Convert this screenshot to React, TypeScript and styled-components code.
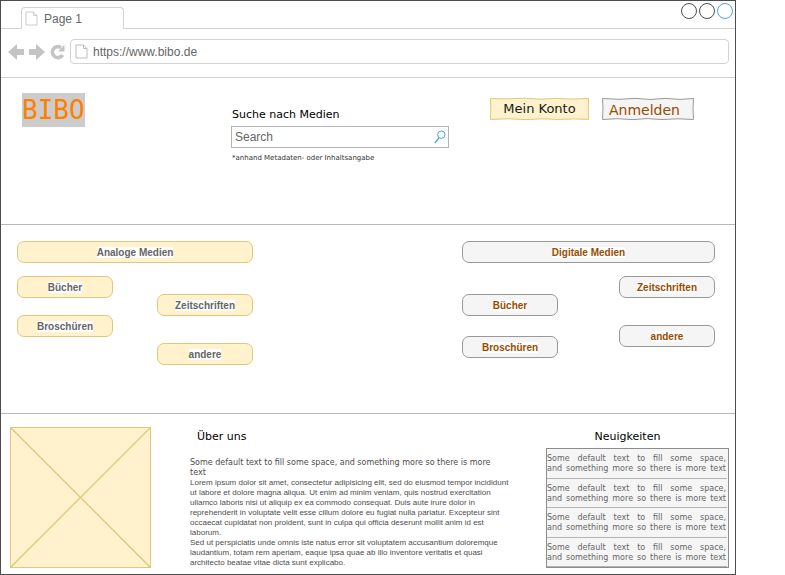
import React from "react";
import styled, { createGlobalStyle, css } from "styled-components";

type Tone = "cream" | "grey";

const tones = {
  cream: { fill: "#fff2cc", line: "#dfc87c", text: "#666666" },
  grey: { fill: "#f5f5f5", line: "#999999", text: "#994c00" },
};

const arial = '"Liberation Sans", Arial, sans-serif';
const verdana = '"DejaVu Sans", Verdana, sans-serif';

const GlobalStyle = createGlobalStyle`
  *, *::before, *::after { box-sizing: border-box; }
  body { margin: 0; background: #ffffff; font-family: ${arial}; color: #666666; }
  h1, h2, p, ul { margin: 0; padding: 0; }
  button, input { font: inherit; color: inherit; }
  button { padding: 0; border: 0; background: none; cursor: pointer; }
`;

const BrowserWindow = styled.div`
  margin-right: 49px;
  min-width: 640px;
  border: 1px solid #4d4d4d;
`;

const TabBar = styled.div`
  display: flex;
  justify-content: space-between;
  align-items: flex-start;
  height: 28px;
  padding: 0 2px 0 20px;
  border-bottom: 1px solid #d3d3d3;
`;

const Tab = styled.button`
  display: flex;
  align-items: center;
  gap: 6px;
  width: 103px;
  height: 22px;
  margin-top: 6px;
  padding: 0 3px;
  border: 1px solid #d3d3d3;
  border-bottom: 0;
  border-radius: 4px 4px 0 0;
  background: #ffffff;
  font-size: 12px;
`;

const WindowControls = styled.div`
  display: flex;
  gap: 2px;
  padding-top: 2px;
`;

const Circle = styled.button<{ $color: string }>`
  width: 16px;
  height: 16px;
  border: 1px solid ${(p) => p.$color};
  border-radius: 50%;
`;

const Toolbar = styled.div`
  display: flex;
  align-items: center;
  height: 49px;
  padding: 0 6px 3px 7px;
  border-bottom: 1px solid #d3d3d3;
`;

const NavButton = styled.button`
  display: flex;
  width: 21px;
  height: 18px;
`;

const AddressField = styled.label`
  display: flex;
  flex: 1;
  align-items: center;
  gap: 5px;
  height: 25px;
  margin-left: -1px;
  padding: 0 4px;
  border: 1px solid #d3d3d3;
  border-radius: 4px;
`;

const TextInput = styled.input`
  flex: 1;
  min-width: 0;
  height: 20px;
  padding: 0;
  border: 0;
  outline: 0;
  background: transparent;
  font-size: 12px;
  appearance: none;
  &::placeholder { color: #666666; opacity: 1; }
`;

const Header = styled.header`
  display: flex;
  align-items: flex-start;
  height: 147px;
  padding: 15px 41px 0 21px;
  border-bottom: 1px solid #b8b8b8;
`;

const LogoCell = styled.div`
  width: 209px;
`;

const Logo = styled.h1`
  width: max-content;
  background: #cccccc;
  color: #ff8000;
  font: 400 26px/34px "DejaVu Sans Mono", monospace;
`;

const SearchForm = styled.form`
  flex: 1;
  margin-right: 41px;
  padding-top: 15px;
  font-family: ${verdana};
`;

const SearchLabel = styled.label`
  display: block;
  padding-left: 1px;
  color: #000000;
  font-size: 11px;
  line-height: 14px;
`;

const SearchBox = styled.div`
  display: flex;
  align-items: center;
  height: 22px;
  margin: 4px 0 6px;
  padding: 0 2px 0 3px;
  border: 1px solid #b3b3b3;
  font-family: ${arial};
`;

const Hint = styled.p`
  padding-left: 1px;
  color: #333333;
  font-size: 7px;
  line-height: 9px;
`;

const Actions = styled.div`
  display: flex;
  gap: 13px;
  padding-top: 5px;
`;

const SketchButton = styled.button<{ $kind: "account" | "login" }>`
  position: relative;
  height: 22px;
  font-family: ${verdana};
  white-space: nowrap;
  ${(p) =>
    p.$kind === "account"
      ? css`
          width: 99px;
          color: #1a1a1a;
          font-size: 13px;
          line-height: 22px;
        `
      : css`
          width: 92px;
          padding-right: 7px;
          color: #994c00;
          font-size: 14px;
          line-height: 24px;
        `}
`;

const SketchOutline = styled.svg`
  position: absolute;
  inset: 0;
  width: 100%;
  height: 100%;
  overflow: visible;
`;

const SketchText = styled.span`
  position: relative;
`;

const MediaSection = styled.section`
  display: flex;
  justify-content: space-between;
  height: 189px;
  padding: 16px 20px 0 16px;
  border-bottom: 1px solid #b8b8b8;
`;

const MediaGroup = styled.div<{ $width: number }>`
  width: ${(p) => p.$width}px;
`;

const MediaColumns = styled.div`
  display: flex;
  justify-content: space-between;
  padding-top: 13px;
`;

const MediaColumn = styled.div<{ $top: number; $gap: number }>`
  display: flex;
  flex-direction: column;
  gap: ${(p) => p.$gap}px;
  width: 96px;
  padding-top: ${(p) => p.$top}px;
`;

const Pill = styled.button<{ $tone: Tone }>`
  display: flex;
  align-items: center;
  justify-content: center;
  width: 100%;
  height: 22px;
  border: 1px solid ${(p) => tones[p.$tone].line};
  border-radius: 7px;
  background: ${(p) => tones[p.$tone].fill};
  color: ${(p) => tones[p.$tone].text};
  font-size: 10px;
  font-weight: 700;
`;

const PillText = styled.span`
  background: #ffffff;
  line-height: 11px;
`;

const InfoSection = styled.section`
  display: flex;
  align-items: flex-start;
  height: 160px;
  padding: 13px 6px 0 9px;
`;

const Picture = styled.svg`
  flex: none;
  width: 141px;
  height: 141px;
`;

const Heading = styled.h2`
  color: #000000;
  font: 400 11px/14px ${verdana};
`;

const About = styled.article`
  flex: 1;
  min-width: 0;
  padding: 3px 0 0 39px;
  color: #4d4d4d;

  ${Heading} {
    padding-left: 7px;
    margin-bottom: 14px;
  }
`;

const Paragraph = styled.p<{ $lead?: boolean }>`
  font-family: ${(p) => (p.$lead ? verdana : arial)};
  font-size: 8px;
  line-height: 10px;
  white-space: pre-line;
`;

const News = styled.aside`
  width: 183px;
  padding-top: 3px;

  ${Heading} {
    margin: 0 20px 4px 0;
    text-align: center;
  }
`;

const NewsList = styled.ul`
  display: flex;
  flex-direction: column;
  height: 120px;
  padding-right: 1px;
  border: 1px solid #8c8c8c;
  background: #f5f5f5;
  list-style: none;
`;

const NewsItem = styled.li`
  flex: 1;
  padding: 5px 1px 0 0;
  border-bottom: 1px solid #b3b3b3;
  color: #666666;
  font: 8px/10px ${verdana};
  text-align: justify;
  text-align-last: justify;
  white-space: pre-line;
`;

const PageIcon = ({ color = "#cccccc" }: { color?: string }) => (
  <svg width="13" height="15" viewBox="0 0 13 15" fill="none" stroke={color} aria-hidden="true">
    <path d="M1 1h7.5l3.5 3.5V14H1zM8.5 1v3.5H12" />
  </svg>
);

const Outline = ({ tone, width }: { tone: Tone; width: number }) => (
  <SketchOutline viewBox={`0 0 ${width} 22`} preserveAspectRatio="none" aria-hidden="true">
    <path
      d={
        tone === "cream"
          ? "M.5.7L18 .8 34 .2 51 1.2 66 .4 81 1.1 98.5.5 98.2 12 98.5 21.4 84 20.9 68 21.4 53 20.8 36 21.6 19 20.8.5 21.4.8 10Z"
          : "M.5.5L17 1.3 33 .4 49 1.5 63 .4 78 1.4 91.5.5 91 11 91.5 21.5 76 20.8 60 21.5 45 20.6 31 21.6 15 20.7.5 21.5 1 10Z"
      }
      fill={tones[tone].fill}
      stroke={tones[tone].line}
      strokeLinejoin="round"
    />
  </SketchOutline>
);

interface ColumnData {
  top: number;
  gap: number;
  items: string[];
}

const media: { title: string; tone: Tone; width: number; columns: ColumnData[] }[] = [
  {
    title: "Analoge Medien",
    tone: "cream",
    width: 236,
    columns: [
      { top: 0, gap: 17, items: ["Bücher", "Broschüren"] },
      { top: 18, gap: 27, items: ["Zeitschriften", "andere"] },
    ],
  },
  {
    title: "Digitale Medien",
    tone: "grey",
    width: 253,
    columns: [
      { top: 18, gap: 20, items: ["Bücher", "Broschüren"] },
      { top: 0, gap: 27, items: ["Zeitschriften", "andere"] },
    ],
  },
];

const lead = "Some default text to fill some space, and something more so there is more\ntext";

const newsText = "Some default text to fill some space,\nand something more so there is more text";

const lorem = `Lorem ipsum dolor sit amet, consectetur adipisicing elit, sed do eiusmod tempor incididunt
ut labore et dolore magna aliqua. Ut enim ad minim veniam, quis nostrud exercitation
ullamco laboris nisi ut aliquip ex ea commodo consequat. Duis aute irure dolor in
reprehenderit in voluptate velit esse cillum dolore eu fugiat nulla pariatur. Excepteur sint
occaecat cupidatat non proident, sunt in culpa qui officia deserunt mollit anim id est
laborum.
Sed ut perspiciatis unde omnis iste natus error sit voluptatem accusantium doloremque
laudantium, totam rem aperiam, eaque ipsa quae ab illo inventore veritatis et quasi
architecto beatae vitae dicta sunt explicabo.`;

const MediaPill = ({ tone, children }: { tone: Tone; children: React.ReactNode }) => (
  <Pill type="button" $tone={tone}>
    <PillText>{children}</PillText>
  </Pill>
);

export default function App() {
  return (
    <>
      <GlobalStyle />
      <BrowserWindow>
        <TabBar>
          <Tab type="button">
            <PageIcon />
            Page 1
          </Tab>
          <WindowControls>
            <Circle type="button" aria-label="Minimieren" $color="#4d4d4d" />
            <Circle type="button" aria-label="Maximieren" $color="#4d4d4d" />
            <Circle type="button" aria-label="Schließen" $color="#4ba3e3" />
          </WindowControls>
        </TabBar>
        <Toolbar>
          <NavButton type="button" aria-label="Zurück">
            <svg width="17" height="18" viewBox="0 0 17 18" fill="#c4c4c4">
              <path d="M0 9 9 1v5h7v6H9v5z" />
            </svg>
          </NavButton>
          <NavButton type="button" aria-label="Vorwärts">
            <svg width="17" height="18" viewBox="0 0 17 18" fill="#c4c4c4">
              <path d="M16 9 7 1v5H0v6h7v5z" />
            </svg>
          </NavButton>
          <NavButton type="button" aria-label="Neu laden">
            <svg width="17" height="18" viewBox="0 0 17 18">
              <path d="M12.6 12A5.5 5.5 0 1 1 11 4.6" fill="none" stroke="#c4c4c4" strokeWidth="3.6" />
              <path d="M14.5 1.5V8.5H8z" fill="#c4c4c4" />
            </svg>
          </NavButton>
          <AddressField>
            <PageIcon color="#bdbdbd" />
            <TextInput type="text" aria-label="Adresse" defaultValue="https://www.bibo.de" />
          </AddressField>
        </Toolbar>

        <Header>
          <LogoCell>
            <Logo>BIBO</Logo>
          </LogoCell>
          <SearchForm onSubmit={(e) => e.preventDefault()}>
            <SearchLabel htmlFor="search">Suche nach Medien</SearchLabel>
            <SearchBox>
              <TextInput id="search" type="text" placeholder="Search" />
              <svg width="12" height="14" viewBox="0 0 12 14" fill="none" stroke="#4ba3e3" aria-hidden="true">
                <circle cx="7.3" cy="4.7" r="3.7" />
                <path d="M5 7.8.8 13" strokeWidth="1.3" />
              </svg>
            </SearchBox>
            <Hint>*anhand Metadaten- oder Inhaltsangabe</Hint>
          </SearchForm>
          <Actions>
            <SketchButton type="button" $kind="account">
              <Outline tone="cream" width={99} />
              <SketchText>Mein Konto</SketchText>
            </SketchButton>
            <SketchButton type="button" $kind="login">
              <Outline tone="grey" width={92} />
              <SketchText>Anmelden</SketchText>
            </SketchButton>
          </Actions>
        </Header>

        <MediaSection>
          {media.map((group) => (
            <MediaGroup key={group.title} $width={group.width}>
              <MediaPill tone={group.tone}>{group.title}</MediaPill>
              <MediaColumns>
                {group.columns.map((column, i) => (
                  <MediaColumn key={i} $top={column.top} $gap={column.gap}>
                    {column.items.map((item) => (
                      <MediaPill key={item} tone={group.tone}>
                        {item}
                      </MediaPill>
                    ))}
                  </MediaColumn>
                ))}
              </MediaColumns>
            </MediaGroup>
          ))}
        </MediaSection>

        <InfoSection>
          <Picture viewBox="0 0 141 141" role="img" aria-label="Bild" stroke="#dfc87c">
            <rect x=".5" y=".5" width="140" height="140" fill="#fff2cc" />
            <path d="M.5.5l140 140M140.5.5l-140 140" strokeWidth="1.4" />
          </Picture>
          <About>
            <Heading>Über uns</Heading>
            <Paragraph $lead>{lead}</Paragraph>
            <Paragraph>{lorem}</Paragraph>
          </About>
          <News>
            <Heading>Neuigkeiten</Heading>
            <NewsList>
              {[0, 1, 2, 3].map((n) => (
                <NewsItem key={n}>{newsText}</NewsItem>
              ))}
            </NewsList>
          </News>
        </InfoSection>
      </BrowserWindow>
    </>
  );
}
